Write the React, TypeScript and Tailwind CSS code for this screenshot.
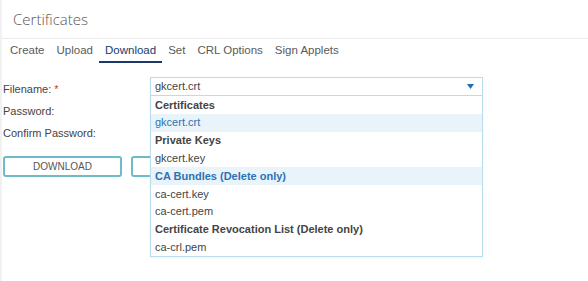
const tabs = ["Create", "Upload", "Download", "Set", "CRL Options", "Sign Applets"];

type Option = { label: string; group?: boolean; active?: boolean };

const options: Option[] = [
  { label: "Certificates", group: true },
  { label: "gkcert.crt", active: true },
  { label: "Private Keys", group: true },
  { label: "gkcert.key" },
  { label: "CA Bundles (Delete only)", group: true, active: true },
  { label: "ca-cert.key" },
  { label: "ca-cert.pem" },
  { label: "Certificate Revocation List (Delete only)", group: true },
  { label: "ca-crl.pem" },
];

const FormRow = ({ label, required }: { label: string; required?: boolean }) => (
  <div className="flex h-[22px] items-center">
    <div className="w-[148px] text-[11px] text-[#444]">
      {label}
      {required && <span className="ml-[3px] text-[#e0302b]">*</span>}
    </div>
    <div className="h-[19px] w-[332px] border border-[#b9dcef] bg-white" />
  </div>
);

export default function App() {
  return (
    <div className="h-[281px] w-[588px] overflow-hidden border-l-2 border-[#f1f1f1] bg-white font-['Liberation_Sans',Arial,sans-serif]">
      <div className="flex h-[39px] items-center border-b border-[#ececec] pl-[11px]">
        <h1 className="font-['Open_Sans',sans-serif] text-[15px] font-light text-[#555]">
          Certificates
        </h1>
      </div>

      <div className="flex h-[24px] items-stretch pl-[2px]">
        {tabs.map((t) => (
          <div
            key={t}
            className={
              t === "Download"
                ? "flex items-center border-b-2 border-[#1b3a6b] px-[6px] pt-[1px] text-[11.5px] text-[#1b3a6b]"
                : "flex items-center border-b-2 border-transparent px-[6px] pt-[1px] text-[11.5px] text-[#5a5a5a]"
            }
          >
            {t}
          </div>
        ))}
      </div>

      <div className="relative pl-[1px] pt-[15px]">
        <FormRow label="Filename:" required />
        <FormRow label="Password:" />
        <FormRow label="Confirm Password:" />

        <div className="mt-[12px] flex gap-[9px]">
          <button className="h-[21px] w-[119px] rounded-[3px] border-2 border-[#6cbccd] bg-white text-[10px] text-[#555]">
            DOWNLOAD
          </button>
          <button className="h-[21px] w-[119px] rounded-[3px] border-2 border-[#6cbccd] bg-white" />
        </div>

        <div className="absolute left-[148px] top-[14px] w-[333px] border border-[#b9dcef] bg-white shadow-[0_1px_2px_rgba(0,0,0,0.06)]">
          <div className="flex h-[18px] items-center justify-between border-b border-[#b9dcef] pl-[4px] pr-[8px] text-[11px] text-[#444]">
            <span>gkcert.crt</span>
            <svg width="7" height="5" viewBox="0 0 7 5">
              <path d="M0 0 H7 L3.5 5 Z" fill="#1d6fbf" />
            </svg>
          </div>
          {options.map((o) => (
            <div
              key={o.label}
              className={[
                "flex h-[17.8px] items-center pl-[4px] text-[11px]",
                o.active ? "bg-[#e9f3fa] text-[#2c72b5]" : "text-[#444]",
                o.group ? "font-bold" : "",
              ].join(" ")}
            >
              {o.label}
            </div>
          ))}
        </div>
      </div>
    </div>
  );
}
